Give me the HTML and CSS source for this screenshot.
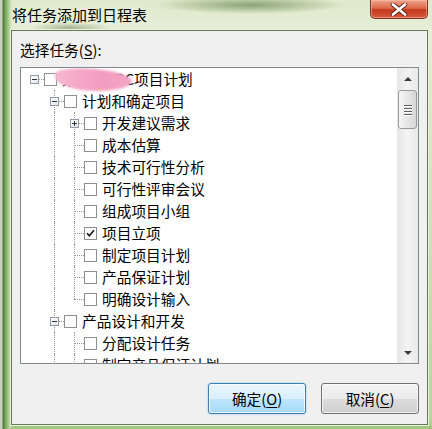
FILE: index.html
```html
<!DOCTYPE html>
<html lang="zh-CN">
<head>
    <meta charset="UTF-8">
    <title>将任务添加到日程表</title>
    <link rel="stylesheet" href="styles.css">
</head>
<body>
    <div class="window">
        <div class="titlebar">
            <span class="title">将任务添加到日程表</span>
            <button class="close" aria-label="关闭">
                <svg width="20" height="13" viewBox="0 0 20 13">
                    <path d="M4 1.5 L16 11.5 M16 1.5 L4 11.5" stroke="#5a1a10" stroke-width="4.4" stroke-linecap="round"/>
                    <path d="M4 1.5 L16 11.5 M16 1.5 L4 11.5" stroke="#fff" stroke-width="2.8" stroke-linecap="round"/>
                </svg>
            </button>
        </div>

        <div class="client">
            <div class="field-label">选择任务(<u>S</u>):</div>

            <div class="tree">
                <div class="tree-list">
                    <div class="row">
                        <span class="cell root"><span class="exp"></span></span>
                        <span class="check"></span>
                        <span class="label">某某某ABC项目计划</span>
                        <span class="redact"></span>
                    </div>
                    <div class="row">
                        <span class="cell"></span>
                        <span class="cell tee"><span class="exp"></span></span>
                        <span class="check"></span>
                        <span class="label">计划和确定项目</span>
                    </div>
                    <div class="row">
                        <span class="cell"></span>
                        <span class="cell pipe"></span>
                        <span class="cell tee"><span class="exp plus"></span></span>
                        <span class="check"></span>
                        <span class="label">开发建议需求</span>
                    </div>
                    <div class="row">
                        <span class="cell"></span>
                        <span class="cell pipe"></span>
                        <span class="cell tee"></span>
                        <span class="check"></span>
                        <span class="label">成本估算</span>
                    </div>
                    <div class="row">
                        <span class="cell"></span>
                        <span class="cell pipe"></span>
                        <span class="cell tee"></span>
                        <span class="check"></span>
                        <span class="label">技术可行性分析</span>
                    </div>
                    <div class="row">
                        <span class="cell"></span>
                        <span class="cell pipe"></span>
                        <span class="cell tee"></span>
                        <span class="check"></span>
                        <span class="label">可行性评审会议</span>
                    </div>
                    <div class="row">
                        <span class="cell"></span>
                        <span class="cell pipe"></span>
                        <span class="cell tee"></span>
                        <span class="check"></span>
                        <span class="label">组成项目小组</span>
                    </div>
                    <div class="row">
                        <span class="cell"></span>
                        <span class="cell pipe"></span>
                        <span class="cell tee"></span>
                        <span class="check checked">
                            <svg width="11" height="11" viewBox="0 0 11 11">
                                <path d="M2 5.2 L4.3 7.8 L9 2.2" fill="none" stroke="#1a1a1a" stroke-width="1.7"/>
                            </svg>
                        </span>
                        <span class="label">项目立项</span>
                    </div>
                    <div class="row">
                        <span class="cell"></span>
                        <span class="cell pipe"></span>
                        <span class="cell tee"></span>
                        <span class="check"></span>
                        <span class="label">制定项目计划</span>
                    </div>
                    <div class="row">
                        <span class="cell"></span>
                        <span class="cell pipe"></span>
                        <span class="cell tee"></span>
                        <span class="check"></span>
                        <span class="label">产品保证计划</span>
                    </div>
                    <div class="row">
                        <span class="cell"></span>
                        <span class="cell pipe"></span>
                        <span class="cell elbow"></span>
                        <span class="check"></span>
                        <span class="label">明确设计输入</span>
                    </div>
                    <div class="row">
                        <span class="cell"></span>
                        <span class="cell tee"><span class="exp"></span></span>
                        <span class="check"></span>
                        <span class="label">产品设计和开发</span>
                    </div>
                    <div class="row">
                        <span class="cell"></span>
                        <span class="cell pipe"></span>
                        <span class="cell tee"></span>
                        <span class="check"></span>
                        <span class="label">分配设计任务</span>
                    </div>
                    <div class="row">
                        <span class="cell"></span>
                        <span class="cell pipe"></span>
                        <span class="cell tee"></span>
                        <span class="check"></span>
                        <span class="label">制定产品保证计划</span>
                    </div>
                </div>

                <div class="vscroll">
                    <span class="arrow-btn"><span class="arrow up"></span></span>
                    <span class="thumb"><i></i><i></i><i></i><i></i></span>
                    <span class="track"></span>
                    <span class="arrow-btn"><span class="arrow down"></span></span>
                </div>
            </div>

            <div class="actions">
                <button class="btn default">确定(<u>O</u>)</button>
                <button class="btn">取消(<u>C</u>)</button>
            </div>
        </div>
    </div>
</body>
</html>
```

FILE: styles.css
```css
* {
    margin: 0;
    padding: 0;
    box-sizing: border-box;
}

body {
    font-family: 'Noto Sans CJK SC', 'Liberation Sans', sans-serif;
    font-size: 14.7px;
    color: #000;
    background: #cfe0b2;
}

.window {
    width: 432px;
    height: 429px;
    display: flex;
    flex-direction: column;
    background:
        radial-gradient(ellipse 95px 9px at 250px 5px, rgba(70, 105, 45, 0.55), transparent),
        radial-gradient(ellipse 40px 6px at 70px 28px, rgba(60, 90, 40, 0.4), transparent),
        linear-gradient(to right, #c7d1bb 0, #c7d1bb 2px, #4d7a3a 3px, #7fae62 6px, #c2dca8 10px, transparent 12px),
        linear-gradient(to bottom, #dfe9cb 0, #e6eed6 30px, #b9d49c 420px, #9cc47c 429px);
}

/* title bar */
.titlebar {
    height: 30px;
    display: flex;
    justify-content: space-between;
    align-items: flex-start;
    padding-left: 12px;
}

.title {
    line-height: 30px;
    font-size: 15px;
    text-shadow: 0 0 6px #f4f8ec;
}

.close {
    width: 58px;
    height: 19px;
    margin-right: 4px;
    border: 1px solid #7a3326;
    border-top: none;
    border-radius: 0 0 5px 5px;
    background: linear-gradient(to bottom, #eea48c 0, #dd6a4c 45%, #c4391f 55%, #d85a3c 100%);
    box-shadow: inset 0 0 0 1px rgba(255, 200, 180, 0.5);
    display: flex;
    align-items: center;
    justify-content: center;
}

/* client area */
.client {
    margin-left: 11px;
    width: 417px;
    height: 395px;
    border: 1px solid #66785a;
    box-shadow: 0 0 0 1px #eaf1dc;
    background: #f0f0f0;
    padding: 9px 8px 0;
    display: flex;
    flex-direction: column;
}

.field-label {
    height: 20px;
    line-height: 20px;
    margin-bottom: 7px;
}

u {
    text-decoration: underline;
    text-underline-offset: 2px;
}

/* tree view */
.tree {
    height: 297px;
    border: 1px solid #828790;
    background: #fff;
    display: flex;
}

.tree-list {
    flex: 1;
    overflow: hidden;
    padding-left: 3px;
}

.row {
    height: 22px;
    display: flex;
    align-items: center;
    white-space: nowrap;
    position: relative;
}

.cell {
    width: 20px;
    height: 22px;
    flex: none;
    position: relative;
    display: flex;
    align-items: center;
    justify-content: center;
}

.cell.tee::before,
.cell.pipe::before,
.cell.elbow::before {
    content: '';
    position: absolute;
    left: 10px;
    top: 0;
    bottom: 0;
    border-left: 1px dotted #9a9a9a;
}

.cell.elbow::before {
    bottom: 11px;
}

.cell.tee::after,
.cell.elbow::after,
.cell.root::after {
    content: '';
    position: absolute;
    left: 10px;
    right: 0;
    top: 11px;
    border-top: 1px dotted #9a9a9a;
}

.exp {
    width: 9px;
    height: 9px;
    border: 1px solid #8f9aa6;
    background: linear-gradient(to bottom right, #fff, #e2e4e8);
    position: relative;
    z-index: 1;
    margin-left: 1px;
}

.exp::before {
    content: '';
    position: absolute;
    left: 1px;
    top: 3px;
    width: 5px;
    height: 1px;
    background: #333;
}

.exp.plus::after {
    content: '';
    position: absolute;
    left: 3px;
    top: 1px;
    width: 1px;
    height: 5px;
    background: #333;
}

.check {
    width: 13px;
    height: 13px;
    flex: none;
    border: 1px solid #8e8f8f;
    background: #fff;
    margin-right: 5px;
    display: flex;
    align-items: center;
    justify-content: center;
}

.label {
    line-height: 22px;
}

/* pink smudge hiding part of the root name */
.redact {
    position: absolute;
    left: 31px;
    top: 1px;
    width: 77px;
    height: 22px;
    background: linear-gradient(to right, #f7b6cf, #f29cbf 60%, #f4a5c5);
    border-radius: 50% 55% 60% 45% / 35% 45% 60% 55%;
    transform: rotate(4deg);
    filter: blur(1px);
}

/* scrollbar */
.vscroll {
    width: 21px;
    flex: none;
    display: flex;
    flex-direction: column;
    background: linear-gradient(to right, #e6e6e6, #f3f3f3 50%, #e9e9e9);
}

.arrow-btn {
    height: 21px;
    display: flex;
    align-items: center;
    justify-content: center;
}

.arrow-btn:first-child {
    height: 22px;
}

.arrow {
    width: 0;
    height: 0;
    border-left: 4px solid transparent;
    border-right: 4px solid transparent;
}

.arrow.up {
    border-bottom: 4px solid #3a3a3a;
}

.arrow.down {
    border-top: 4px solid #3a3a3a;
}

.thumb {
    height: 39px;
    margin: 0 1px;
    border: 1px solid #999;
    border-radius: 3px;
    background: linear-gradient(to right, #f6f6f6, #e4e4e4 55%, #d6d6d6);
    display: flex;
    flex-direction: column;
    align-items: center;
    justify-content: center;
    gap: 2px;
}

.thumb i {
    width: 8px;
    height: 1px;
    background: #5e5e5e;
    box-shadow: 0 1px 0 #fff;
}

.track {
    flex: 1;
}

/* buttons */
.actions {
    margin-top: 19px;
    display: flex;
    justify-content: flex-end;
    gap: 15px;
}

.btn {
    width: 98px;
    height: 31px;
    font-family: inherit;
    font-size: 14.7px;
    color: #000;
    border: 1px solid #707070;
    border-radius: 3px;
    background: linear-gradient(to bottom, #f2f2f2 0, #ebebeb 50%, #dddddd 51%, #cfcfcf 100%);
    box-shadow: inset 0 0 0 1px rgba(255, 255, 255, 0.7);
}

.btn.default {
    border-color: #3c7fb1;
    background: linear-gradient(to bottom, #eaf6fd 0, #d9f0fc 50%, #bee6fd 51%, #a7d9f5 100%);
    box-shadow: inset 0 0 0 1px rgba(255, 255, 255, 0.8), 0 0 2px #7fc0ea;
}
```
